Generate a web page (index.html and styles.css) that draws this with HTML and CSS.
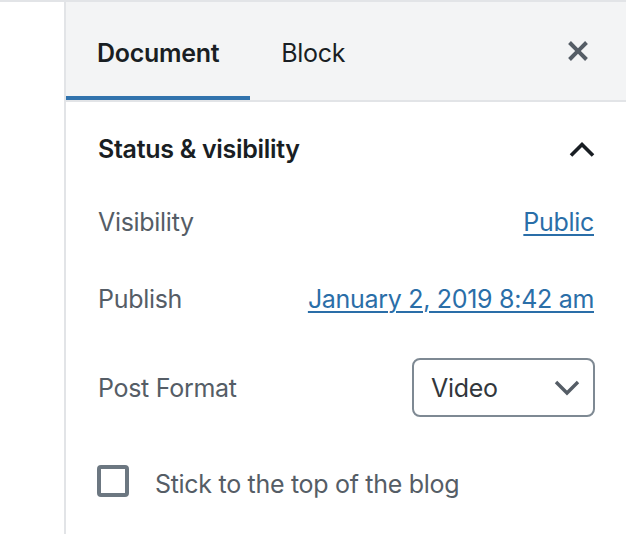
FILE: index.html
```html
<!DOCTYPE html>
<html lang="en">
<head>
<meta charset="utf-8">
<title>Document settings</title>
<link rel="stylesheet" href="styles.css">
</head>
<body>
<div class="app">
  <div class="canvas"></div>
  <aside class="sidebar">
    <div class="sidebar-header">
      <button class="tab is-active">Document</button>
      <button class="tab">Block</button>
      <button class="close" aria-label="Close settings">
        <svg width="40" height="40" viewBox="0 0 20 20"><path fill="#555d66" d="M14.95 6.46L11.41 10l3.54 3.54-1.42 1.41L10 11.42l-3.53 3.53-1.42-1.42L8.58 10 5.05 6.47l1.42-1.42L10 8.58l3.54-3.530z"/></svg>
      </button>
    </div>
    <section class="panel">
      <div class="panel-title">
        <span>Status &amp; visibility</span>
        <svg class="chev-up" width="26" height="18" viewBox="0 0 26 18"><polyline points="2,15.5 13,4.5 24,15.5" fill="none" stroke="#191e23" stroke-width="3.6"/></svg>
      </div>
      <div class="row row-visibility">
        <span class="label">Visibility</span>
        <a class="link" href="#">Public</a>
      </div>
      <div class="row row-publish">
        <span class="label">Publish</span>
        <a class="link" href="#">January 2, 2019 8:42 am</a>
      </div>
      <div class="row row-format">
        <span class="label">Post Format</span>
        <div class="select">
          <span>Video</span>
          <svg width="26" height="18" viewBox="0 0 26 18"><polyline points="2,3 13,14 24,3" fill="none" stroke="#555d66" stroke-width="3.4"/></svg>
        </div>
      </div>
      <div class="row row-sticky">
        <span class="checkbox"></span>
        <span class="label">Stick to the top of the blog</span>
      </div>
    </section>
  </aside>
</div>
</body>
</html>
```
FILE: styles.css
```css
html, body {
  margin: 0;
  padding: 0;
  background: #fff;
}
body {
  font-family: Inter, "Noto Sans", sans-serif;
  letter-spacing: -0.3px;
  border-top: 2px solid #e2e4e7;
}
.app {
  display: flex;
  height: 532px;
}
.canvas {
  width: 64px;
  flex: none;
}
.sidebar {
  flex: 1;
  border-left: 2px solid #e2e4e7;
  display: flex;
  flex-direction: column;
}
.sidebar-header {
  display: flex;
  align-items: stretch;
  height: 98px;
  background: #f3f4f5;
  border-bottom: 2px solid #e2e4e7;
}
.tab {
  font-family: inherit;
  font-size: 25px;
  font-weight: 400;
  letter-spacing: -0.3px;
  color: #191e23;
  background: none;
  border: 0;
  padding: 3px 31px 0 31px;
  margin: 0;
  cursor: pointer;
}
.tab.is-active {
  font-weight: 600;
  box-shadow: inset 0 -4px 0 #3173ad;
}
.close {
  margin-left: auto;
  margin-right: 28px;
  background: none;
  border: 0;
  padding: 0;
  display: flex;
  align-items: center;
}
.panel {
  padding: 32px 32px 0 32px;
}
.panel-title {
  display: flex;
  align-items: center;
  justify-content: space-between;
  height: 30px;
  font-size: 25px;
  font-weight: 600;
  color: #191e23;
}
.chev-up {
  margin-right: -1px;
}
.row {
  display: flex;
  align-items: center;
  justify-content: space-between;
  font-size: 25px;
}
.label {
  color: #555d66;
}
.link {
  color: #2a6ea8;
  text-decoration: underline;
  text-underline-offset: 3px;
  text-decoration-thickness: 2px;
}
.row-visibility {
  margin-top: 40px;
  height: 36px;
}
.row-publish {
  margin-top: 41px;
  height: 36px;
}
.row-format {
  margin-top: 41px;
  height: 59px;
}
.select {
  box-sizing: border-box;
  width: 183px;
  height: 59px;
  margin-right: -1px;
  border: 2px solid #7e8993;
  border-radius: 8px;
  display: flex;
  align-items: center;
  justify-content: space-between;
  padding: 0 13px 0 17px;
  color: #32373c;
}
.row-sticky {
  margin-top: 48px;
  height: 32px;
  justify-content: flex-start;
  gap: 26px;
}
.checkbox {
  box-sizing: border-box;
  width: 32px;
  height: 32px;
  margin-left: -1px;
  border: 4px solid #6c7781;
  border-radius: 4px;
}
.row-sticky .label {
  margin-top: 5px;
}
```
